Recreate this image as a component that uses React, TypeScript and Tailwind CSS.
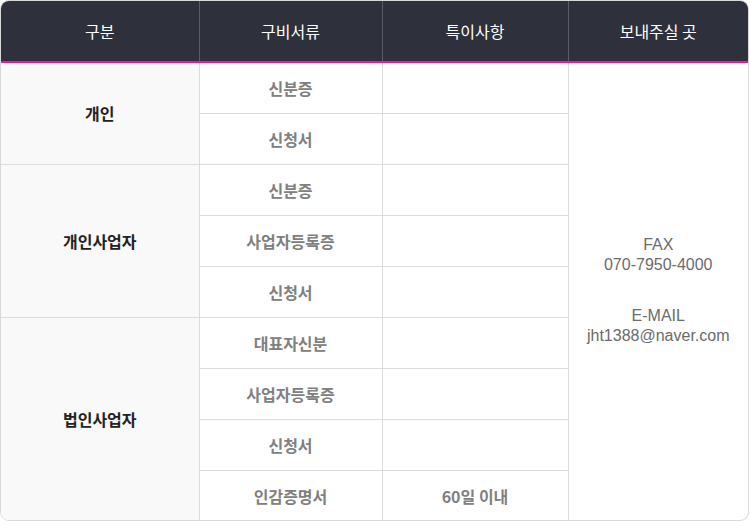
import React from "react";

const font = { fontFamily: '"Noto Sans CJK KR", "Noto Sans", sans-serif' };
const latin = { fontFamily: '"Liberation Sans", "Noto Sans", sans-serif' };

type Row = { doc: string; note?: string };
const groups: { name: string; rows: Row[] }[] = [
  { name: "개인", rows: [{ doc: "신분증" }, { doc: "신청서" }] },
  { name: "개인사업자", rows: [{ doc: "신분증" }, { doc: "사업자등록증" }, { doc: "신청서" }] },
  {
    name: "법인사업자",
    rows: [{ doc: "대표자신분" }, { doc: "사업자등록증" }, { doc: "신청서" }, { doc: "인감증명서", note: "60일 이내" }],
  },
];

export default function App() {
  let first = true;
  return (
    <div className="w-[750px] h-[528px] bg-white" style={font}>
      <div className="w-[749px] h-[521px] rounded-[9px] border border-[#d8d8d8] overflow-hidden">
        <table className="w-full border-collapse table-fixed">
          <colgroup>
            <col className="w-[198px]" />
            <col className="w-[183px]" />
            <col className="w-[186px]" />
            <col />
          </colgroup>
          <thead>
            <tr className="h-[61px] bg-[#2e313b] text-white text-[16px] border-b-2 border-[#ee1691]">
              <th className="font-normal">구분</th>
              <th className="font-normal border-l border-[#5a5d66]">구비서류</th>
              <th className="font-normal border-l border-[#5a5d66]">특이사항</th>
              <th className="font-normal border-l border-[#5a5d66]">보내주실 곳</th>
            </tr>
          </thead>
          <tbody className="text-[16px]">
            {groups.map((g, gi) =>
              g.rows.map((r, ri) => {
                const showContact = first;
                first = false;
                return (
                  <tr key={gi + "-" + ri} className="h-[51px]">
                    {ri === 0 && (
                      <td
                        rowSpan={g.rows.length}
                        className={
                          "bg-[#f9f9f9] text-center font-bold text-[#222] border-r border-[#dcdcdc] " +
                          (gi > 0 ? "border-t border-[#dcdcdc]" : "")
                        }
                      >
                        {g.name}
                      </td>
                    )}
                    <td
                      className={
                        "text-center font-bold text-[#808080] " + (gi > 0 || ri > 0 ? "border-t border-[#dcdcdc]" : "")
                      }
                    >
                      {r.doc}
                    </td>
                    <td
                      className={
                        "text-center font-bold text-[#808080] border-l border-[#dcdcdc] " +
                        (gi > 0 || ri > 0 ? "border-t border-[#dcdcdc]" : "")
                      }
                    >
                      {r.note ?? ""}
                    </td>
                    {showContact && (
                      <td
                        rowSpan={9}
                        className="text-center text-[#6b6b6b] border-l border-[#dcdcdc] leading-[20px] text-[16px]"
                        style={latin}
                      >
                        <div className="-mt-[3px]">
                          <div>FAX</div>
                          <div>070-7950-4000</div>
                        </div>
                        <div className="mt-[31px]">
                          <div>E-MAIL</div>
                          <div>jht1388@naver.com</div>
                        </div>
                      </td>
                    )}
                  </tr>
                );
              })
            )}
          </tbody>
        </table>
      </div>
    </div>
  );
}
